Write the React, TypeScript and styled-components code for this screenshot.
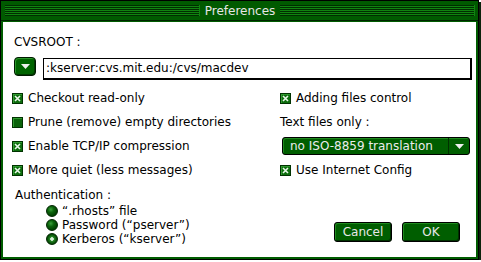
import styled, {createGlobalStyle} from 'styled-components';

const GlobalStyle = createGlobalStyle`
    html, body {
        margin: 0;
        padding: 0;
        background: #ffffff;
    }
    body {
        font-family: 'DejaVu Sans', 'Liberation Sans', sans-serif;
        font-size: 12px;
        color: #000000;
    }
`;

const leftOptions = [
    {label: 'Checkout read-only', checked: true},
    {label: 'Prune (remove) empty directories', checked: false},
    {label: 'Enable TCP/IP compression', checked: true},
    {label: 'More quiet (less messages)', checked: true},
];

const authModes = [
    {label: '\u201c.rhosts\u201d file', selected: false},
    {label: 'Password (\u201cpserver\u201d)', selected: false},
    {label: 'Kerberos (\u201ckserver\u201d)', selected: true},
];

const DownArrow = () => (
    <svg width="9" height="5" viewBox="0 0 9 5">
        <path d="M0 0 H9 L4.5 5 Z" fill="#f0f0f0" />
    </svg>
);

const CheckMark = () => (
    <svg width="7" height="7" viewBox="0 0 7 7">
        <path d="M1 1 L6 6 M6 1 L1 6" stroke="#e8f8e8" strokeWidth="1.6" />
    </svg>
);

const CheckOption: React.FC<{label: string; checked: boolean}> = function ({label, checked}) {
    return (
        <OptionRow>
            <CheckBox $checked={checked}>{checked && <CheckMark />}</CheckBox>
            <span>{label}</span>
        </OptionRow>
    );
};

export default function App() {
    return (
        <>
            <GlobalStyle />
            <Window>
                <TitleBar>
                    <Stripes />
                    <Title>Preferences</Title>
                    <Stripes />
                </TitleBar>
                <Content>
                    <FieldLabel>CVSROOT :</FieldLabel>
                    <RootRow>
                        <SquareButton>
                            <DownArrow />
                        </SquareButton>
                        <TextField>:kserver:cvs.mit.edu:/cvs/macdev</TextField>
                    </RootRow>
                    <OptionsGrid>
                        <Column>
                            {leftOptions.map(o => (
                                <CheckOption key={o.label} label={o.label} checked={o.checked} />
                            ))}
                        </Column>
                        <Column>
                            <CheckOption label="Adding files control" checked />
                            <OptionRow>Text files only :</OptionRow>
                            <OptionRow>
                                <PopupMenu>
                                    <PopupText>no ISO-8859 translation</PopupText>
                                    <PopupArrow>
                                        <DownArrow />
                                    </PopupArrow>
                                </PopupMenu>
                            </OptionRow>
                            <CheckOption label="Use Internet Config" checked />
                        </Column>
                    </OptionsGrid>
                    <BottomRow>
                        <AuthGroup>
                            <AuthLabel>Authentication :</AuthLabel>
                            {authModes.map(m => (
                                <RadioRow key={m.label}>
                                    <Radio $selected={m.selected} />
                                    <span>{m.label}</span>
                                </RadioRow>
                            ))}
                        </AuthGroup>
                        <ButtonGroup>
                            <PushButton>Cancel</PushButton>
                            <PushButton>OK</PushButton>
                        </ButtonGroup>
                    </BottomRow>
                </Content>
            </Window>
        </>
    );
}

/* Styled components */

const Window = styled.div`
    width: 479px;
    height: 260px;
    box-sizing: border-box;
    border: 1px solid #000000;
    background: #005c00;
    padding: 0 2px 2px 2px;
    display: flex;
    flex-direction: column;
    box-shadow: 2px 2px 0 #0c220c;
`;

const TitleBar = styled.div`
    height: 20px;
    margin: 0 -2px;
    box-sizing: border-box;
    padding: 4px 3px 4px 4px;
    background: #005a00;
    border-bottom: 1px solid #002400;
    display: flex;
    align-items: center;
`;

const Stripes = styled.div`
    flex: 1;
    height: 11px;
    background: repeating-linear-gradient(to bottom, #002e00 0 1px, #108410 1px 2px);
    border-right: 1px solid #108410;
`;

const Title = styled.div`
    padding: 0 5px;
    color: #e6e6e6;
    font-size: 12px;
    line-height: 12px;
`;

const Content = styled.div`
    flex: 1;
    margin-top: 1px;
    background: #ffffff;
    padding: 13px 0 0 9px;
    display: flex;
    flex-direction: column;
`;

const FieldLabel = styled.div`
    margin-left: 2px;
    line-height: 14px;
    height: 14px;
`;

const RootRow = styled.div`
    margin-top: 8px;
    margin-left: 2px;
    display: flex;
    align-items: flex-start;
    gap: 7px;
`;

const SquareButton = styled.div`
    width: 22px;
    height: 19px;
    box-sizing: border-box;
    border: 1px solid #001a00;
    border-radius: 4px;
    background: #006400;
    box-shadow: inset 1px 1px 0 #2a962a, inset -1px -1px 0 #003a00;
    display: flex;
    align-items: center;
    justify-content: center;
`;

const TextField = styled.div`
    width: 429px;
    height: 22px;
    box-sizing: border-box;
    margin-top: 1px;
    border-style: solid;
    border-color: #000000;
    border-width: 1px 2px 2px 1px;
    padding-left: 2px;
    line-height: 19px;
`;

const OptionsGrid = styled.div`
    margin-top: 6px;
    display: grid;
    grid-template-columns: 268px 1fr;
`;

const Column = styled.div`
    display: flex;
    flex-direction: column;
`;

const OptionRow = styled.div`
    height: 24px;
    display: flex;
    align-items: center;
    gap: 5px;
    white-space: nowrap;
`;

const CheckBox = styled.span<{$checked: boolean}>`
    width: 11px;
    height: 11px;
    box-sizing: border-box;
    border: 1px solid #003200;
    background: ${p => (p.$checked ? '#0e6e0e' : '#0a620a')};
    box-shadow: inset 1px 1px 0 #2f9a2f;
    display: flex;
    align-items: center;
    justify-content: center;
`;

const PopupMenu = styled.div`
    width: 188px;
    height: 18px;
    margin-left: 2px;
    box-sizing: border-box;
    border: 1px solid #000000;
    border-radius: 3px;
    background: #005e00;
    box-shadow: inset 1px 1px 0 #1f8a1f;
    display: flex;
    align-items: stretch;
`;

const PopupText = styled.div`
    flex: 1;
    padding-left: 7px;
    color: #ececec;
    line-height: 16px;
    font-size: 12px;
`;

const PopupArrow = styled.div`
    width: 20px;
    border-left: 1px solid #003000;
    display: flex;
    align-items: center;
    justify-content: center;
`;

const BottomRow = styled.div`
    margin-top: 6px;
    display: flex;
    justify-content: space-between;
    align-items: flex-end;
    padding-right: 16px;
`;

const AuthGroup = styled.div`
    margin-left: 3px;
    display: flex;
    flex-direction: column;
`;

const AuthLabel = styled.div`
    height: 14px;
    line-height: 14px;
    margin-bottom: 2px;
`;

const RadioRow = styled.div`
    height: 14px;
    margin-left: 31px;
    display: flex;
    align-items: center;
    gap: 4px;
    white-space: nowrap;
`;

const Radio = styled.span<{$selected: boolean}>`
    width: 12px;
    height: 12px;
    border-radius: 50%;
    box-sizing: border-box;
    border: 1px solid #002400;
    background: ${p =>
        p.$selected
            ? 'radial-gradient(circle at 50% 50%, #d8f0d8 0 1.5px, #2a8a2a 2px, #0a5a0a 4px, #003a00 6px)'
            : 'radial-gradient(circle at 38% 35%, #3aa03a 0, #0c640c 3px, #024402 6px)'};
`;

const ButtonGroup = styled.div`
    display: flex;
    gap: 10px;
    margin-bottom: 4px;
`;

const PushButton = styled.div`
    width: 58px;
    height: 20px;
    box-sizing: border-box;
    border: 1px solid #000000;
    border-radius: 3px;
    background: #005e00;
    box-shadow: inset 1px 1px 0 #1f8a1f, inset -1px -1px 0 #003000;
    color: #e8e8e8;
    font-size: 12px;
    line-height: 18px;
    text-align: center;
`;
